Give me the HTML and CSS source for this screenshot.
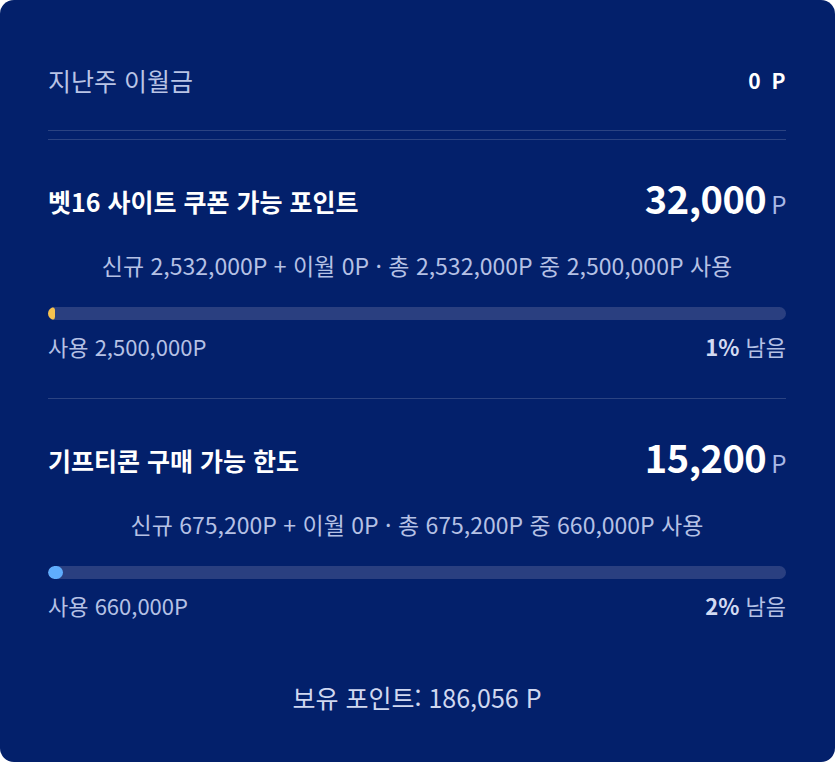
FILE: index.html
```html
<!DOCTYPE html>
<html lang="ko">
<head>
<meta charset="utf-8">
<link rel="stylesheet" href="styles.css">
</head>
<body>
<div class="card">
  <div class="carry">
    <span class="carry-label">지난주 이월금</span>
    <span class="carry-value">0 P</span>
  </div>
  <div class="double-rule"></div>

  <section class="block">
    <div class="head">
      <span class="title">벳16 사이트 쿠폰 가능 포인트</span>
      <span class="amount">32,000<span class="unit">P</span></span>
    </div>
    <p class="detail">신규 2,532,000P + 이월 0P · 총 2,532,000P 중 2,500,000P 사용</p>
    <div class="track"><div class="fill fill-yellow" style="width:1%"></div></div>
    <div class="foot">
      <span>사용 2,500,000P</span>
      <span><b>1%</b> 남음</span>
    </div>
  </section>

  <div class="rule"></div>

  <section class="block block-2">
    <div class="head">
      <span class="title">기프티콘 구매 가능 한도</span>
      <span class="amount">15,200<span class="unit">P</span></span>
    </div>
    <p class="detail">신규 675,200P + 이월 0P · 총 675,200P 중 660,000P 사용</p>
    <div class="track"><div class="fill fill-blue" style="width:2%"></div></div>
    <div class="foot">
      <span>사용 660,000P</span>
      <span><b>2%</b> 남음</span>
    </div>
  </section>

  <div class="total">보유 포인트: 186,056 P</div>
</div>
</body>
</html>
```

FILE: styles.css
```css
html, body {
  margin: 0;
  padding: 0;
  background: #ffffff;
}
body {
  font-family: "Noto Sans CJK KR", "Noto Sans", sans-serif;
}
.card {
  box-sizing: border-box;
  width: 835px;
  height: 762px;
  background: #03206b;
  border-radius: 14px;
  padding: 0 49px 0 48px;
  display: flex;
  flex-direction: column;
  color: #ffffff;
}
.carry {
  display: flex;
  justify-content: space-between;
  align-items: center;
  height: 60px;
  margin-top: 50px;
}
.carry-label {
  font-size: 25px;
  color: #b9c4e6;
}
.carry-value {
  font-size: 21px;
  font-weight: 700;
  letter-spacing: 2.5px;
  margin-right: -2px;
}
.double-rule {
  margin-top: 20px;
  height: 10px;
  border-top: 1px solid rgba(255,255,255,0.16);
  border-bottom: 1px solid rgba(255,255,255,0.16);
  box-sizing: border-box;
}
.block {
  display: flex;
  flex-direction: column;
  padding-top: 38px;
}
.head {
  display: flex;
  justify-content: space-between;
  align-items: center;
  height: 46px;
}
.title {
  font-size: 25px;
  font-weight: 700;
}
.amount {
  font-size: 38px;
  font-weight: 700;
  letter-spacing: -0.5px;
  position: relative;
  top: -4px;
}
.unit {
  font-size: 24px;
  font-weight: 400;
  color: #a9b8e6;
  margin-left: 5px;
}
.detail {
  margin: 26px 0 0;
  text-align: center;
  font-size: 23px;
  color: #b5c1e5;
  line-height: 30px;
}
.track {
  margin-top: 27px;
  height: 13px;
  border-radius: 7px;
  background: #2a3f80;
  overflow: hidden;
}
.fill {
  height: 100%;
  border-radius: 7px;
  min-width: 7px;
}
.fill-yellow { background: #f6c24f; min-width: 6px; }
.fill-blue { background: #5fadfd; min-width: 14px; }
.foot {
  display: flex;
  justify-content: space-between;
  margin-top: 11px;
  font-size: 22px;
  line-height: 30px;
  color: #b5c1e5;
}
.foot b {
  font-weight: 700;
  color: #d2daf2;
}
.rule {
  margin-top: 37px;
  height: 1px;
  background: rgba(255,255,255,0.16);
}
.total {
  margin-top: 59px;
  text-align: center;
  font-size: 25px;
  color: #d0d8f0;
}
```
